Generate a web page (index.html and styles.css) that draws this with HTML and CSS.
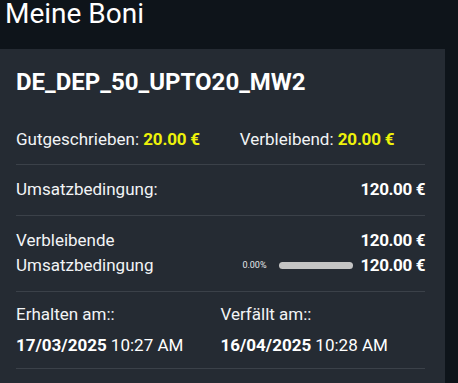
FILE: index.html
```html
<!DOCTYPE html>
<html lang="de">
<head>
<meta charset="utf-8">
<title>Meine Boni</title>
<link rel="stylesheet" href="styles.css">
</head>
<body>
<div class="page">
  <header class="page-header">
    <h1 class="page-title">Meine Boni</h1>
  </header>
  <section class="bonus-card">
    <h2 class="bonus-name">DE_DEP_50_UPTO20_MW2</h2>
    <div class="row row-amounts">
      <div class="amount"><span class="label">Gutgeschrieben:</span> <span class="value-yellow">20.00 €</span></div>
      <div class="amount"><span class="label">Verbleibend:</span> <span class="value-yellow">20.00 €</span></div>
    </div>
    <div class="row row-split">
      <span class="label">Umsatzbedingung:</span>
      <span class="value">120.00 €</span>
    </div>
    <div class="row row-split">
      <span class="label label-wrap">Verbleibende Umsatzbedingung</span>
      <div class="right-stack">
        <span class="value">120.00 €</span>
        <div class="progress-line">
          <span class="percent">0.00%</span>
          <span class="bar"><span class="bar-fill" style="width:0%"></span></span>
          <span class="value">120.00 €</span>
        </div>
      </div>
    </div>
    <div class="row row-dates">
      <div class="date-col">
        <span class="label">Erhalten am::</span>
        <span class="date"><b>17/03/2025</b> 10:27 AM</span>
      </div>
      <div class="date-col">
        <span class="label">Verfällt am::</span>
        <span class="date"><b>16/04/2025</b> 10:28 AM</span>
      </div>
    </div>
  </section>
</div>
</body>
</html>
```
FILE: styles.css
```css
html, body {
  margin: 0;
  padding: 0;
  background: #0e141a;
  color: #ffffff;
  font-family: Roboto, "Liberation Sans", sans-serif;
}
.page {
  width: 445px;
}
.page-header {
  padding: 1px 0 22px 5px;
}
.page-title {
  margin: 0;
  font-size: 28px;
  line-height: 26px;
  font-weight: 400;
  color: #ffffff;
}
.bonus-card {
  background: #252b33;
  padding: 18px 20px 0 16px;
  min-height: 334px;
  box-sizing: border-box;
}
.bonus-name {
  margin: 0 0 18px;
  font-size: 24px;
  line-height: 30px;
  font-weight: 700;
  color: #ffffff;
}
.row {
  font-size: 17px;
  line-height: 25px;
  padding: 12px 0;
  border-bottom: 1px solid #3b4149;
}
.row-amounts {
  display: flex;
  gap: 40px;
}
.label {
  color: #f2f4f6;
}
.value-yellow {
  color: #eef20a;
  font-weight: 700;
  letter-spacing: -0.2px;
}
.value {
  font-weight: 700;
  color: #ffffff;
  letter-spacing: -0.4px;
}
.row-split {
  display: flex;
  justify-content: space-between;
  align-items: flex-start;
  padding: 12px 0 13px;
}
.label-wrap {
  width: 150px;
}
.right-stack {
  display: flex;
  flex-direction: column;
  align-items: flex-end;
}
.progress-line {
  display: flex;
  align-items: center;
}
.percent {
  font-size: 9px;
  color: #e6e8ea;
  margin-right: 12px;
}
.bar {
  display: block;
  width: 74px;
  height: 7px;
  border-radius: 4px;
  background: #c4c4c4;
  margin-right: 8px;
  overflow: hidden;
}
.bar-fill {
  display: block;
  height: 100%;
  background: #eef20a;
}
.row-dates {
  display: grid;
  grid-template-columns: 1fr 1fr;
  padding: 10px 0;
}
.date-col {
  display: flex;
  flex-direction: column;
  gap: 6px;
}
.date b {
  font-weight: 700;
}
```
